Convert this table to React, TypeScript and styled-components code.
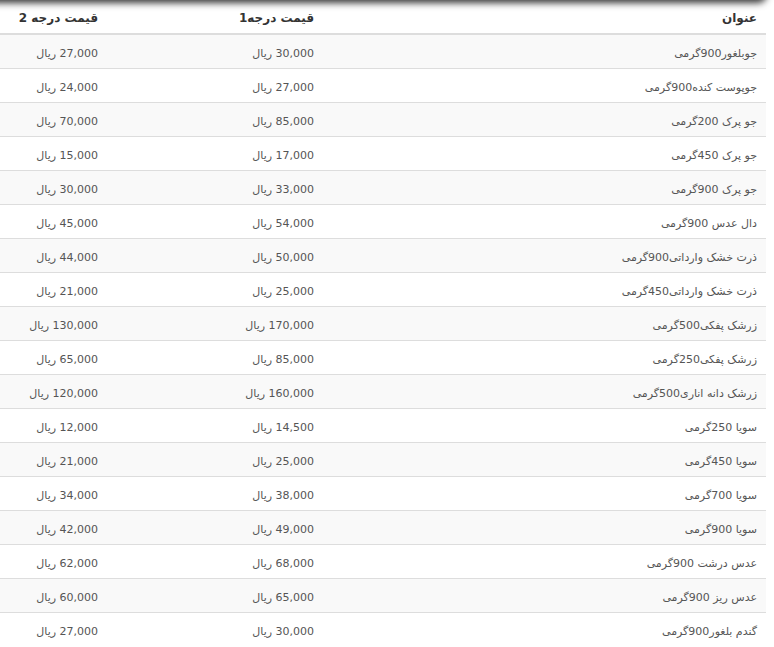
import React from "react";
import styled, { createGlobalStyle } from "styled-components";

const GlobalStyle = createGlobalStyle`
  html, body { margin: 0; padding: 0; background: #ffffff; }
  body { font-family: "DejaVu Sans", Tahoma, sans-serif; overflow: hidden; }
`;

const Page = styled.div`
  width: 774px;
  height: 647px;
  overflow: hidden;
  position: relative;
  background: #fff;
`;

const TopShade = styled.div`
  position: absolute;
  top: -6px;
  left: -10px;
  width: 774px;
  height: 6px;
  border-radius: 0 0 8px 0;
  box-shadow: 0 0 7px 3px rgba(0, 0, 0, 0.78);
  background: #444;
  z-index: 2;
`;

const Table = styled.table`
  direction: rtl;
  width: 766px;
  border-collapse: collapse;
  table-layout: fixed;
`;

const Col = styled.col<{ $w: number }>`
  width: ${(p) => p.$w}px;
`;

const HeadCell = styled.th`
  box-sizing: border-box;
  text-align: right;
  font-weight: bold;
  font-size: 12px;
  color: #333;
  padding: 10px 9px 6px 8px;
  line-height: 17px;
  border-bottom: 2px solid #dddddd;
  white-space: nowrap;
`;

const Row = styled.tr<{ $odd: boolean }>`
  background: ${(p) => (p.$odd ? "#f9f9f9" : "#ffffff")};
`;

const Cell = styled.td`
  box-sizing: border-box;
  text-align: right;
  font-size: 11px;
  color: #555;
  padding: 10px 9px 6px 8px;
  line-height: 17px;
  border-top: 1px solid #dddddd;
  white-space: nowrap;
`;

const rows: [string, string, string][] = [
  ["جوبلغور900گرمی", "30,000", "27,000"],
  ["جوپوست کنده900گرمی", "27,000", "24,000"],
  ["جو پرک 200گرمی", "85,000", "70,000"],
  ["جو پرک 450گرمی", "17,000", "15,000"],
  ["جو پرک 900گرمی", "33,000", "30,000"],
  ["دال عدس 900گرمی", "54,000", "45,000"],
  ["ذرت خشک وارداتی900گرمی", "50,000", "44,000"],
  ["ذرت خشک وارداتی450گرمی", "25,000", "21,000"],
  ["زرشک پفکی500گرمی", "170,000", "130,000"],
  ["زرشک پفکی250گرمی", "85,000", "65,000"],
  ["زرشک دانه اناری500گرمی", "160,000", "120,000"],
  ["سویا 250گرمی", "14,500", "12,000"],
  ["سویا 450گرمی", "25,000", "21,000"],
  ["سویا 700گرمی", "38,000", "34,000"],
  ["سویا 900گرمی", "49,000", "42,000"],
  ["عدس درشت 900گرمی", "68,000", "62,000"],
  ["عدس ریز 900گرمی", "65,000", "60,000"],
  ["گندم بلغور900گرمی", "30,000", "27,000"],
];

export default function App() {
  return (
    <Page>
      <GlobalStyle />
      <TopShade />
      <Table>
        <colgroup>
          <Col $w={443} />
          <Col $w={216} />
          <Col $w={107} />
        </colgroup>
        <thead>
          <tr>
            <HeadCell>عنوان</HeadCell>
            <HeadCell>قیمت درجه1</HeadCell>
            <HeadCell>قیمت درجه 2</HeadCell>
          </tr>
        </thead>
        <tbody>
          {rows.map((r, i) => (
            <Row key={i} $odd={i % 2 === 0}>
              <Cell>{r[0]}</Cell>
              <Cell>{r[1]} ریال</Cell>
              <Cell>{r[2]} ریال</Cell>
            </Row>
          ))}
        </tbody>
      </Table>
    </Page>
  );
}
